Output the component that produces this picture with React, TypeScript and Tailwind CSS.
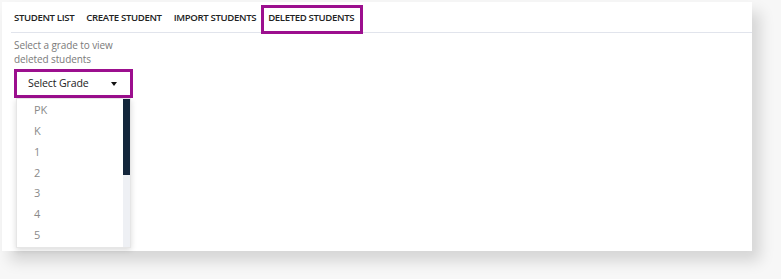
import React from "react";

const grades = ["PK", "K", "1", "2", "3", "4", "5"];

export default function App() {
  return (
    <div
      className="w-[781px] h-[279px] bg-[#f7f7f7] overflow-hidden pt-[2px] pl-[2px]"
      style={{ fontFamily: '"Open Sans", "Noto Sans", sans-serif' }}
    >
      <div className="relative w-[750px] h-[249px] bg-white shadow-[8px_10px_14px_rgba(0,0,0,0.14)]">
        {/* Tabs */}
        <div className="flex items-end h-[31px] ml-[9px] border-b border-[#e1e4ec] pl-[3px] gap-[12px] text-[9.6px] font-semibold text-[#222] tracking-[-0.35px]">
          <div className="h-full flex items-center pt-[2px]">STUDENT LIST</div>
          <div className="h-full flex items-center pt-[2px]">CREATE STUDENT</div>
          <div className="h-full flex items-center pt-[2px]">IMPORT STUDENTS</div>
          <div className="relative h-full flex items-center pt-[2px]">
            <span>DELETED STUDENTS</span>
            <div className="absolute left-0 right-0 bottom-[-1px] h-[2px] bg-[#2f6fdc]" />
            <div className="absolute left-[-7px] right-[-9px] top-[3px] bottom-[-2px] border-[3px] border-[#9c0f8e]" />
          </div>
        </div>

        {/* Content */}
        <div className="pl-[12px] pt-[5px]">
          <div className="text-[10px] leading-[14px] text-[#7a7a7a] tracking-[-0.1px] w-[130px]">
            Select a grade to view
            <br />
            deleted students
          </div>
          <div className="relative mt-[3px] w-[119px]">
            <div className="h-[29px] border-[3px] border-[#9c0f8e] flex items-center justify-between pl-[11px] pr-[13px] text-[10.6px] tracking-[-0.15px] text-[#222]">
              <span>Select Grade</span>
              <svg width="6" height="4" viewBox="0 0 6 4">
                <path d="M0 0 L6 0 L3 4 Z" fill="#111" />
              </svg>
            </div>
            <div className="ml-[2px] w-[115px] h-[150px] bg-white border border-[#e6e6e6] shadow-[0_2px_6px_rgba(0,0,0,0.15)] flex">
              <div className="flex-1 pt-[1px]">
                {grades.map((g) => (
                  <div
                    key={g}
                    className="h-[20.8px] flex items-center pl-[17px] text-[11px] text-[#8a8a8a]"
                  >
                    {g}
                  </div>
                ))}
              </div>
              <div className="w-[7px] h-full bg-[#eef0f4] flex flex-col">
                <div className="h-[76px] bg-[#13263b]" />
              </div>
            </div>
          </div>
        </div>
      </div>
    </div>
  );
}
